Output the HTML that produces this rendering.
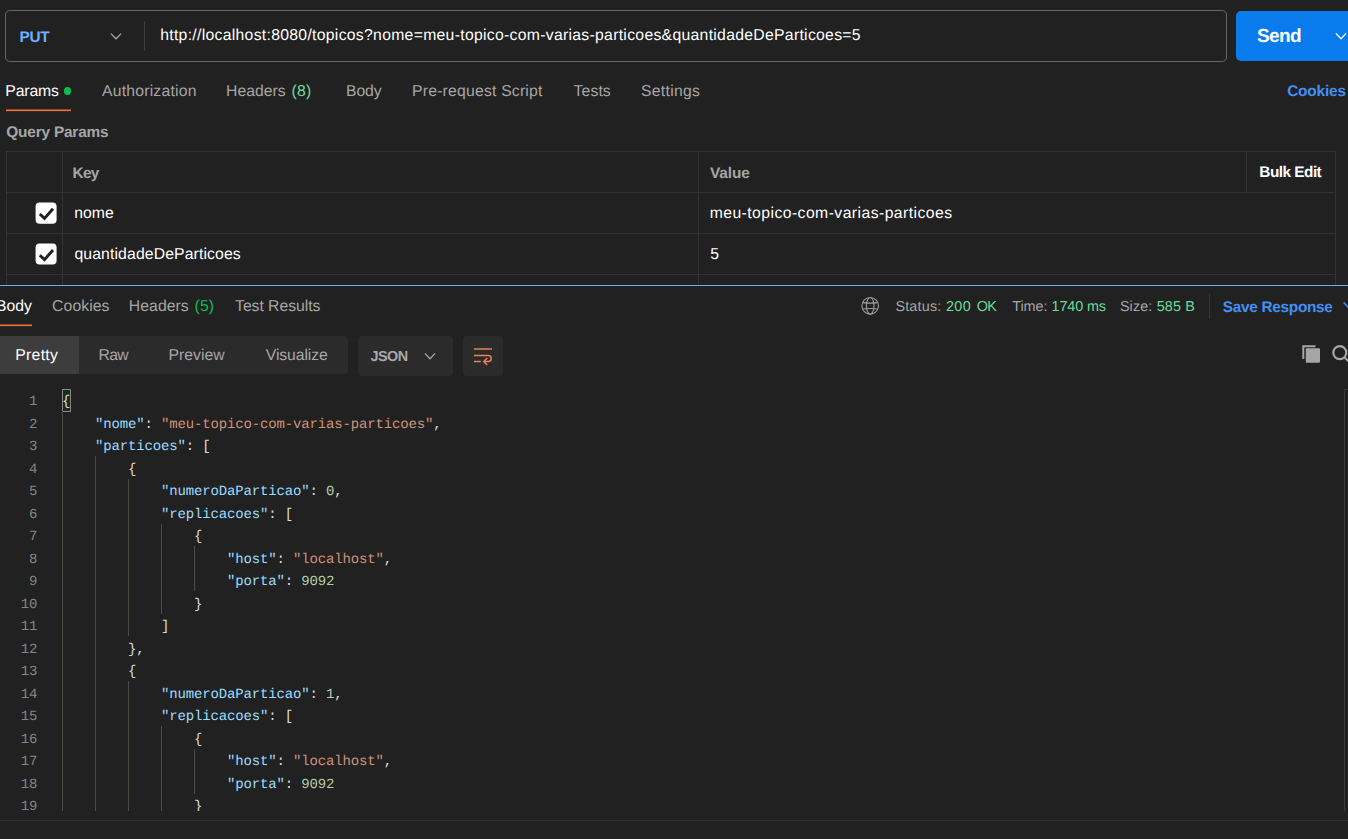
<!DOCTYPE html>
<html lang="pt">
<head>
<meta charset="utf-8">
<title>Postman</title>
<style>
*{box-sizing:border-box;margin:0;padding:0}
html,body{width:1348px;height:839px;overflow:hidden;background:#212121}
body{position:relative;font-family:"Liberation Sans",sans-serif;font-size:15px;color:#fff;text-rendering:geometricPrecision}
.abs{position:absolute;white-space:nowrap}
.t{position:absolute;white-space:nowrap;line-height:20px;height:20px}
#urlbox{left:5px;top:10px;width:1222px;height:52px;border:1px solid #666;border-radius:5px}
#udiv{left:144px;top:21px;width:1px;height:30px;background:#3d3d3d}
#sendbtn{left:1236px;top:10.6px;width:130px;height:50.4px;background:#097bed;border-radius:5px}
.hl{position:absolute;background:#333;height:1px;left:6px;width:1330px}
.vl{position:absolute;background:#333;width:1px;top:151.2px}
.cb{position:absolute;left:35.6px;width:21px;height:21px;background:#fff;border-radius:4px}
#blue{left:0;top:284.7px;width:1348px;height:1.4px;background:#6fabef}
.seg{position:absolute;top:335.7px;height:38.3px;background:#2b2b2b;border-radius:4px}
.seg2{position:absolute;top:335.7px;height:40.2px;background:#2b2b2b;border-radius:4px}
#code{left:0;top:388.75px;width:1348px;height:422.2px;overflow:hidden;font-family:"Liberation Mono",monospace;font-size:14px;letter-spacing:-0.15px}
.ln{position:absolute;left:0;width:37.2px;text-align:right;color:#858585;height:22.5px;line-height:22.5px}
.cl{position:absolute;left:62px;height:22.5px;line-height:22.5px;white-space:pre;color:#dcdcdc}
.k{color:#9cdcfe}.s{color:#ce9178}.n{color:#b5cea8}
.g{position:absolute;width:1px;background:#4b4b45}
</style>
</head>
<body>
<!-- URL BAR -->
<div class="abs" id="urlbox"></div>
<svg class="abs" style="left:109px;top:30px" width="14" height="12" viewBox="0 0 14 12"><path d="M1.9 3.6 L7 8.8 L12.1 3.6" fill="none" stroke="#a6a6a6" stroke-width="1.3"/></svg>
<div class="abs" id="udiv"></div>
<div class="abs" id="sendbtn"></div>
<svg class="abs" style="left:1334px;top:30px" width="14" height="12" viewBox="0 0 14 12"><path d="M1.9 3.4 L7 8.7 L12.1 3.4" fill="none" stroke="#fff" stroke-width="1.3"/></svg>

<!-- REQUEST TABS -->
<div class="abs" style="left:64.1px;top:87.4px;width:7.2px;height:7.2px;border-radius:50%;background:#0cbb52"></div>
<div class="abs" style="left:6px;top:109px;width:65px;height:1px;background:#8a4a2e"></div><div class="abs" style="left:6px;top:110px;width:65px;height:1px;background:#f36e38"></div><div class="abs" style="left:6px;top:111px;width:65px;height:1px;background:#3a2a25"></div>

<!-- TABLE -->
<div class="hl" style="top:151.2px"></div>
<div class="hl" style="top:191.9px"></div>
<div class="hl" style="top:232.8px"></div>
<div class="hl" style="top:273.7px"></div>
<div class="vl" style="left:6px;height:134px"></div>
<div class="vl" style="left:62px;height:134px"></div>
<div class="vl" style="left:698px;height:134px"></div>
<div class="vl" style="left:1246px;height:41px"></div>
<div class="vl" style="left:1335px;height:134px"></div>
<svg class="abs" style="left:34px;top:201px" width="24" height="24" viewBox="0 0 24 24"><rect x="1.6" y="1.4" width="21" height="21.3" rx="4" fill="#fff"/><path d="M5.8 13 L10.5 17.4 L19 7.8" fill="none" stroke="#212121" stroke-width="2.9"/></svg>
<svg class="abs" style="left:34px;top:242px" width="24" height="24" viewBox="0 0 24 24"><rect x="1.6" y="1.6" width="21" height="21" rx="4" fill="#fff"/><path d="M5.8 13.2 L10.5 17.6 L19 8" fill="none" stroke="#212121" stroke-width="2.9"/></svg>

<!-- RESPONSE HEADER -->
<div class="abs" id="blue"></div>
<div class="abs" style="left:0;top:324px;width:32px;height:1px;background:#8a4a2e"></div><div class="abs" style="left:0;top:325px;width:32px;height:1px;background:#f36e38"></div><div class="abs" style="left:0;top:326px;width:32px;height:1px;background:#3a2a25"></div>
<svg class="abs" style="left:860px;top:296px" width="20" height="20" viewBox="0 0 20 20" fill="none" stroke="#9c9c9c" stroke-width="1.1"><circle cx="10.2" cy="9.8" r="8.3"/><ellipse cx="10.2" cy="9.8" rx="3.8" ry="8.3"/><path d="M2.7 6.6 Q10.2 7.6 17.7 6.6 M2.7 13 Q10.2 12 17.7 13"/></svg>
<div class="abs" style="left:1209px;top:294px;width:1px;height:24.5px;background:#353535"></div>
<svg class="abs" style="left:1340px;top:299px" width="12" height="12" viewBox="0 0 12 12"><path d="M3.6 3.6 L8.8 8.8" fill="none" stroke="#4390f7" stroke-width="1.4"/></svg>

<!-- VIEW MODE -->
<div class="seg" style="left:-5px;width:353px"></div>
<div class="seg" style="left:-5px;width:84.1px;background:#3d3d3d;border-radius:4px 0 0 4px"></div>
<div class="seg2" style="left:358px;width:95px"></div>
<svg class="abs" style="left:423px;top:350px" width="14" height="12" viewBox="0 0 14 12"><path d="M1.9 3.4 L7 8.7 L12.1 3.4" fill="none" stroke="#a6a6a6" stroke-width="1.3"/></svg>
<div class="seg2" style="left:463px;width:40px"></div>
<svg class="abs" style="left:463px;top:336px" width="40" height="40" viewBox="0 0 40 40" fill="none" stroke="#e5825a" stroke-width="1.5"><path d="M10.9 13 H29"/><path d="M10.9 19.5 H25.2 a3 3 0 0 1 0 6 H21"/><path d="M10.9 25.5 H17.8"/><path d="M24.2 22 L20.8 25.5 L24.2 29"/></svg>
<!-- copy / search -->
<svg class="abs" style="left:1300px;top:343px" width="24" height="24" viewBox="0 0 24 24"><path d="M3.3 16 V3.2 H15.5" fill="none" stroke="#a6a6a6" stroke-width="2"/><rect x="5.8" y="5.3" width="14.2" height="14.5" rx="1" fill="#a6a6a6"/></svg>
<svg class="abs" style="left:1328px;top:341px" width="24" height="24" viewBox="0 0 24 24" fill="none" stroke="#a6a6a6" stroke-width="2.2"><circle cx="11.8" cy="11.6" r="6.5"/><path d="M16.4 16.2 L22 21.8"/></svg>

<div class="t" id="put" style="left:19.39px;top:27.94px;font-size:15.4px;color:#6bb0ff;letter-spacing:-0.241px;font-weight:700">PUT</div>
<div class="t" id="url" style="left:160.22px;top:26.14px;font-size:15.75px;color:#ffffff;letter-spacing:0.295px">http://localhost:8080/topicos?nome=meu-topico-com-varias-particoes&amp;quantidadeDeParticoes=5</div>
<div class="t" id="send" style="left:1257.06px;top:26.75px;font-size:19px;color:#ffffff;letter-spacing:-0.664px;font-weight:700">Send</div>
<div class="t" id="params" style="left:5.28px;top:82.04px;font-size:15.75px;color:#ffffff;letter-spacing:-0.133px">Params</div>
<div class="t" id="auth" style="left:102.03px;top:82.04px;font-size:15.75px;color:#a6a6a6;letter-spacing:0.206px">Authorization</div>
<div class="t" id="hdr" style="left:226.03px;top:82.04px;font-size:15.75px;color:#a6a6a6;letter-spacing:0.031px">Headers</div>
<div class="t" id="h8" style="left:291.45px;top:82.04px;font-size:15.75px;color:#6bdd9a;letter-spacing:0.271px">(8)</div>
<div class="t" id="body" style="left:346.03px;top:82.04px;font-size:15.75px;color:#a6a6a6;letter-spacing:-0.085px">Body</div>
<div class="t" id="prs" style="left:412.02px;top:82.04px;font-size:15.75px;color:#a6a6a6;letter-spacing:0.204px">Pre-request Script</div>
<div class="t" id="tests" style="left:573.61px;top:82.04px;font-size:15.75px;color:#a6a6a6;letter-spacing:0.095px">Tests</div>
<div class="t" id="sett" style="left:640.97px;top:82.04px;font-size:15.75px;color:#a6a6a6;letter-spacing:0.295px">Settings</div>
<div class="t" id="cook" style="left:1287.15px;top:82.04px;font-size:15.4px;color:#4390f7;letter-spacing:-0.176px;font-weight:700">Cookies</div>
<div class="t" id="qp" style="left:6.31px;top:122.74px;font-size:15.4px;color:#a6a6a6;letter-spacing:-0.193px;font-weight:700">Query Params</div>
<div class="t" id="key" style="left:72.61px;top:163.94px;font-size:15.4px;color:#a6a6a6;letter-spacing:-0.750px;font-weight:700">Key</div>
<div class="t" id="val" style="left:709.94px;top:164.14px;font-size:15.4px;color:#a6a6a6;letter-spacing:-0.070px;font-weight:700">Value</div>
<div class="t" id="bulk" style="left:1259.36px;top:162.84px;font-size:15.4px;color:#ffffff;letter-spacing:-0.539px;font-weight:700">Bulk Edit</div>
<div class="t" id="nome" style="left:74.16px;top:204.14px;font-size:15.75px;color:#ffffff;letter-spacing:0.037px">nome</div>
<div class="t" id="v1" style="left:709.63px;top:204.04px;font-size:15.75px;color:#ffffff;letter-spacing:0.438px">meu-topico-com-varias-particoes</div>
<div class="t" id="qdp" style="left:74.45px;top:244.64px;font-size:15.75px;color:#ffffff;letter-spacing:0.127px">quantidadeDeParticoes</div>
<div class="t" id="v2" style="left:710.23px;top:245.04px;font-size:15.75px;color:#ffffff;letter-spacing:0.000px">5</div>
<div class="t" id="rbody" style="left:-3.99px;top:297.34px;font-size:15.75px;color:#ffffff;letter-spacing:-0.029px">Body</div>
<div class="t" id="rcook" style="left:52.09px;top:297.34px;font-size:15.75px;color:#a6a6a6;letter-spacing:0.086px">Cookies</div>
<div class="t" id="rhdr" style="left:128.87px;top:297.34px;font-size:15.75px;color:#a6a6a6;letter-spacing:0.052px">Headers</div>
<div class="t" id="h5" style="left:194.57px;top:297.34px;font-size:15.75px;color:#0cbb52;letter-spacing:0.147px">(5)</div>
<div class="t" id="tres" style="left:235.05px;top:297.34px;font-size:15.75px;color:#a6a6a6;letter-spacing:-0.043px">Test Results</div>
<div class="t" id="st" style="left:895.38px;top:296.52px;font-size:14.4px;color:#a6a6a6;letter-spacing:0.183px">Status:</div>
<div class="t" id="s200" style="left:945.92px;top:296.52px;font-size:14.4px;color:#6bdd9a;letter-spacing:0.406px">200</div>
<div class="t" id="sok" style="left:976.70px;top:296.52px;font-size:14.4px;color:#6bdd9a;letter-spacing:-0.750px">OK</div>
<div class="t" id="tm" style="left:1012.31px;top:296.52px;font-size:14.4px;color:#a6a6a6;letter-spacing:-0.078px">Time:</div>
<div class="t" id="tmv" style="left:1051.51px;top:296.52px;font-size:14.4px;color:#6bdd9a;letter-spacing:-0.122px">1740 ms</div>
<div class="t" id="sz" style="left:1119.89px;top:296.52px;font-size:14.4px;color:#a6a6a6;letter-spacing:0.117px">Size:</div>
<div class="t" id="szv" style="left:1156.66px;top:296.52px;font-size:14.4px;color:#6bdd9a;letter-spacing:0.140px">585 B</div>
<div class="t" id="save" style="left:1222.85px;top:297.94px;font-size:15.4px;color:#4390f7;letter-spacing:-0.313px;font-weight:700">Save Response</div>
<div class="t" id="pretty" style="left:15.28px;top:346.24px;font-size:15.75px;color:#ffffff;letter-spacing:0.299px">Pretty</div>
<div class="t" id="raw" style="left:98.39px;top:346.24px;font-size:15.75px;color:#a6a6a6;letter-spacing:-0.613px">Raw</div>
<div class="t" id="prev" style="left:168.39px;top:346.24px;font-size:15.75px;color:#a6a6a6;letter-spacing:0.031px">Preview</div>
<div class="t" id="vis" style="left:265.83px;top:346.24px;font-size:15.75px;color:#a6a6a6;letter-spacing:-0.100px">Visualize</div>
<div class="t" id="json" style="left:370.46px;top:346.52px;font-size:14.4px;color:#a8a8a8;letter-spacing:-0.503px;font-weight:700">JSON</div>

<!-- CODE -->
<div class="abs" id="code">
<div class="abs" style="left:62px;top:0.6px;width:9px;height:23px;border:1px solid #888;background:#1f2a1f"></div>
<div class="ln" style="top:2.5px">1</div><div class="cl" style="top:2.5px">{</div>
<div class="ln" style="top:25px">2</div><div class="cl" style="top:25px">    <span class="k">&quot;nome&quot;</span>: <span class="s">&quot;meu-topico-com-varias-particoes&quot;</span>,</div>
<div class="ln" style="top:47.5px">3</div><div class="cl" style="top:47.5px">    <span class="k">&quot;particoes&quot;</span>: [</div>
<div class="ln" style="top:70px">4</div><div class="cl" style="top:70px">        {</div>
<div class="ln" style="top:92.5px">5</div><div class="cl" style="top:92.5px">            <span class="k">&quot;numeroDaParticao&quot;</span>: <span class="n">0</span>,</div>
<div class="ln" style="top:115px">6</div><div class="cl" style="top:115px">            <span class="k">&quot;replicacoes&quot;</span>: [</div>
<div class="ln" style="top:137.5px">7</div><div class="cl" style="top:137.5px">                {</div>
<div class="ln" style="top:160px">8</div><div class="cl" style="top:160px">                    <span class="k">&quot;host&quot;</span>: <span class="s">&quot;localhost&quot;</span>,</div>
<div class="ln" style="top:182.5px">9</div><div class="cl" style="top:182.5px">                    <span class="k">&quot;porta&quot;</span>: <span class="n">9092</span></div>
<div class="ln" style="top:205px">10</div><div class="cl" style="top:205px">                }</div>
<div class="ln" style="top:227.5px">11</div><div class="cl" style="top:227.5px">            ]</div>
<div class="ln" style="top:250px">12</div><div class="cl" style="top:250px">        },</div>
<div class="ln" style="top:272.5px">13</div><div class="cl" style="top:272.5px">        {</div>
<div class="ln" style="top:295px">14</div><div class="cl" style="top:295px">            <span class="k">&quot;numeroDaParticao&quot;</span>: <span class="n">1</span>,</div>
<div class="ln" style="top:317.5px">15</div><div class="cl" style="top:317.5px">            <span class="k">&quot;replicacoes&quot;</span>: [</div>
<div class="ln" style="top:340px">16</div><div class="cl" style="top:340px">                {</div>
<div class="ln" style="top:362.5px">17</div><div class="cl" style="top:362.5px">                    <span class="k">&quot;host&quot;</span>: <span class="s">&quot;localhost&quot;</span>,</div>
<div class="ln" style="top:385px">18</div><div class="cl" style="top:385px">                    <span class="k">&quot;porta&quot;</span>: <span class="n">9092</span></div>
<div class="ln" style="top:407.5px">19</div><div class="cl" style="top:407.5px">                }</div>
<div class="g" style="left:62px;top:22.5px;height:405px"></div>
<div class="g" style="left:95px;top:67.5px;height:360px"></div>
<div class="g" style="left:128px;top:90px;height:157.5px"></div>
<div class="g" style="left:128px;top:292.5px;height:135px"></div>
<div class="g" style="left:161px;top:135px;height:90px"></div>
<div class="g" style="left:161px;top:337.5px;height:90px"></div>
<div class="g" style="left:194px;top:157.5px;height:45px"></div>
<div class="g" style="left:194px;top:360px;height:45px"></div>
</div>
<div class="abs" style="left:1344px;top:389px;width:1px;height:422px;background:#3a3a3a"></div>
<div class="abs" style="left:1344px;top:389px;width:4px;height:1px;background:#3a3a3a"></div>

<!-- FOOTER -->
<div class="abs" style="left:0;top:820px;width:1348px;height:1px;background:#303030"></div>
</body>
</html>
